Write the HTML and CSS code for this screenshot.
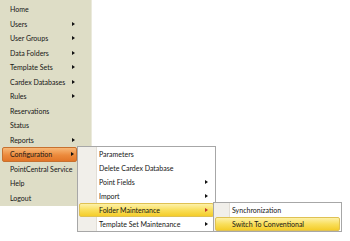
FILE: index.html
```html
<!DOCTYPE html>
<html lang="en">
<head>
    <meta charset="UTF-8">
    <title>Menu</title>
    <link rel="stylesheet" href="styles.css">
</head>
<body>
    <div class="menu-wrap">
        <ul class="main-menu">
            <li class="item">Home</li>
            <li class="item has-sub">Users</li>
            <li class="item has-sub">User Groups</li>
            <li class="item has-sub">Data Folders</li>
            <li class="item has-sub">Template Sets</li>
            <li class="item has-sub">Cardex Databases</li>
            <li class="item has-sub">Rules</li>
            <li class="item">Reservations</li>
            <li class="item">Status</li>
            <li class="item has-sub">Reports</li>
            <li class="item has-sub active">Configuration</li>
            <li class="item">PointCentral Service</li>
            <li class="item">Help</li>
            <li class="item">Logout</li>
        </ul>

        <!-- Configuration submenu -->
        <ul class="sub-menu sub-config">
            <li class="sub-item">Parameters</li>
            <li class="sub-item">Delete Cardex Database</li>
            <li class="sub-item has-sub">Point Fields</li>
            <li class="sub-item has-sub">Import</li>
            <li class="sub-item has-sub hover">Folder Maintenance</li>
            <li class="sub-item has-sub">Template Set Maintenance</li>
        </ul>

        <!-- Folder Maintenance submenu -->
        <ul class="sub-menu sub-folder">
            <li class="sub-item">Synchronization</li>
            <li class="sub-item hover">Switch To Conventional</li>
        </ul>
    </div>
</body>
</html>
```

FILE: styles.css
```css
* {
    box-sizing: border-box;
    margin: 0;
    padding: 0;
}

body {
    font-family: Lato, "Liberation Sans", sans-serif;
    font-size: 7px;
    color: #151515;
    background: #fff;
}

ul {
    list-style: none;
}

.menu-wrap {
    position: relative;
    width: 350px;
    height: 241px;
}

.main-menu {
    width: 92px;
    padding: 2px 0 1px 2px;
    background: #deddc6;
    border-right: 1px solid #ebeadc;
}

.item {
    position: relative;
    height: 14.5px;
    line-height: 14.5px;
    padding-left: 8px;
    white-space: nowrap;
}

.has-sub::after {
    content: "";
    position: absolute;
    right: 16px;
    top: 5px;
    border-left: 3px solid #111;
    border-top: 2.5px solid transparent;
    border-bottom: 2.5px solid transparent;
}

.item.active {
    margin-right: 14px;
    background: linear-gradient(#f8b877, #ec8a3c 55%, #e27628);
    border: 1px solid #c7712f;
    border-radius: 2px;
    line-height: 12.5px;
    padding-left: 7px;
}

.item.active::after {
    right: 2px;
    top: 4px;
}

.sub-menu {
    position: absolute;
    background: #fff;
    border: 1px solid #a7a7a7;
    padding: 0 1px;
    background-image: linear-gradient(90deg, #f1efea 18px, #e2ded6 18px, #e2ded6 19px, #fff 19px);
}

.sub-config {
    left: 77px;
    top: 146px;
    width: 139px;
}

.sub-folder {
    left: 213px;
    top: 202px;
    width: 129px;
    background-image: linear-gradient(90deg, #f1efea 15px, #e2ded6 15px, #e2ded6 16px, #fff 16px);
}

.sub-item {
    position: relative;
    height: 14px;
    line-height: 14px;
    padding-left: 20px;
    white-space: nowrap;
}

.sub-folder .sub-item {
    padding-left: 17px;
}

.sub-item.has-sub::after {
    right: 6px;
    top: 4.5px;
}

.sub-item.hover {
    background: linear-gradient(#fdf1a9, #f9df5c 50%, #f4cd2a);
    border: 1px solid #dfc153;
    border-radius: 2px;
    line-height: 12px;
    padding-left: 19px;
}

.sub-folder .sub-item.hover {
    padding-left: 16px;
}

.sub-item.hover::after {
    right: 5px;
    top: 3.5px;
    border-left-color: #c0392b;
}
```
